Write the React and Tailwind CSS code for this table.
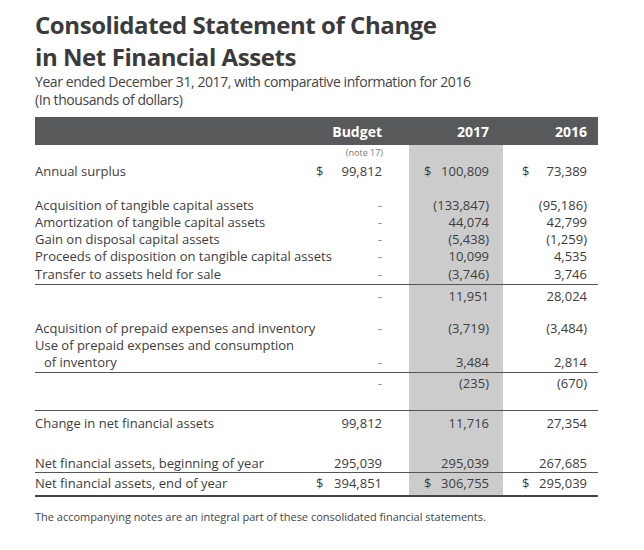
const font = { fontFamily: '"Open Sans", "Liberation Sans", sans-serif' };

function Row({ label, b, c, d, h, line, indent, money, dashB }) {
  return (
    <div className={`flex items-center ${h} ${line || ''}`}>
      <div className={`w-[274px] whitespace-nowrap ${indent ? 'pl-[9px]' : ''}`}>{label}</div>
      <div className="w-[100px] pl-[7px] pr-[27px] flex items-center h-full">
        {money && <span>$</span>}
        <span className={`ml-auto ${dashB ? 'text-[#8a8a8a]' : ''}`}>{b}</span>
      </div>
      <div className="w-[94px] pl-[15px] pr-[14px] flex items-center h-full bg-[#cccccc]">
        {money && <span>$</span>}
        <span className="ml-auto">{c}</span>
      </div>
      <div className="w-[95px] pl-[19px] pr-[11px] flex items-center h-full">
        {money && <span>$</span>}
        <span className="ml-auto">{d}</span>
      </div>
    </div>
  );
}

export default function App() {
  return (
    <div className="w-[644px] h-[550px] bg-white pl-[35px] pt-[9px] text-[#3d3d3d]" style={font}>
      {/* Title */}
      <h1 className="text-[24px] leading-[32px] font-bold text-[#3b3b3b] tracking-[-0.018em]">
        Consolidated Statement of Change
        <br />
        in Net Financial Assets
      </h1>
      <div className="text-[14px] leading-[18px] text-[#444] tracking-[-0.03em]">
        <div>Year ended December 31, 2017, with comparative information for 2016</div>
        <div>(In thousands of dollars)</div>
      </div>

      {/* Table */}
      <div className="mt-[8px] w-[563px] text-[13px]">
        <div className="flex items-center h-[28px] bg-[#58595b] text-white font-bold text-[14px]">
          <div className="w-[274px]" />
          <div className="w-[100px] pr-[27px] text-right">Budget</div>
          <div className="w-[94px] pr-[14px] text-right">2017</div>
          <div className="w-[95px] pr-[11px] text-right">2016</div>
        </div>

        <div className="flex h-[15px]">
          <div className="w-[274px]" />
          <div className="w-[100px] pr-[26px] text-right text-[9px] leading-[15px] text-[#777]">(note 17)</div>
          <div className="w-[94px] bg-[#cccccc]" />
          <div className="w-[95px]" />
        </div>

        <Row label="Annual surplus" b="99,812" c="100,809" d="73,389" money h="h-[24px]" />
        <Row h="h-[13px]" />
        <Row label="Acquisition of tangible capital assets" b="-" dashB c="(133,847)" d="(95,186)" h="h-[17px]" />
        <Row label="Amortization of tangible capital assets" b="-" dashB c="44,074" d="42,799" h="h-[17px]" />
        <Row label="Gain on disposal capital assets" b="-" dashB c="(5,438)" d="(1,259)" h="h-[17px]" />
        <Row label="Proceeds of disposition on tangible capital assets" b="-" dashB c="10,099" d="4,535" h="h-[17px]" />
        <Row label="Transfer to assets held for sale" b="-" dashB c="(3,746)" d="3,746" h="h-[20px]" line="border-b border-[#555]" />
        <Row b="-" dashB c="11,951" d="28,024" h="h-[24px]" />
        <Row h="h-[11px]" />
        <Row label="Acquisition of prepaid expenses and inventory" b="-" dashB c="(3,719)" d="(3,484)" h="h-[17px]" />
        <Row label="Use of prepaid expenses and consumption" h="h-[17px]" />
        <Row label="of inventory" indent b="-" dashB c="3,484" d="2,814" h="h-[19px]" line="border-b border-[#555]" />
        <Row b="-" dashB c="(235)" d="(670)" h="h-[21px]" />
        <Row h="h-[17px]" line="border-b border-[#555]" />
        <Row label="Change in net financial assets" b="99,812" c="11,716" d="27,354" h="h-[25px]" />
        <Row h="h-[19px]" />
        <Row label="Net financial assets, beginning of year" b="295,039" c="295,039" d="267,685" h="h-[18px]" line="border-b border-[#555]" />
        <Row label="Net financial assets, end of year" b="394,851" c="306,755" d="295,039" money h="h-[24px]" line="border-b-2 border-[#444]" />
      </div>

      <p className="mt-[12px] text-[11px] leading-[16px] text-[#444]">
        The accompanying notes are an integral part of these consolidated financial statements.
      </p>
    </div>
  );
}
